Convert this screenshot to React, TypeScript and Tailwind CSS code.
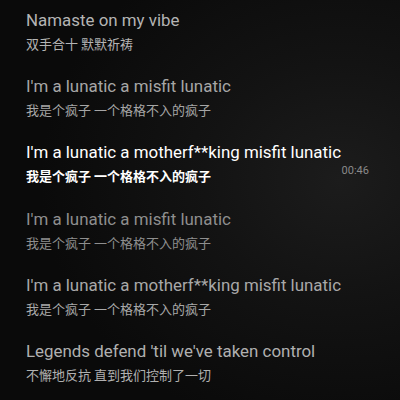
const lines = [
  { en: "Namaste on my vibe", zh: "双手合十 默默祈祷", tone: "text-[#b4b4b4]" },
  { en: "I'm a lunatic a misfit lunatic", zh: "我是个疯子 一个格格不入的疯子", tone: "text-[#a6a6a6]" },
  { en: "I'm a lunatic a motherf**king misfit lunatic", zh: "我是个疯子 一个格格不入的疯子", tone: "active" },
  { en: "I'm a lunatic a misfit lunatic", zh: "我是个疯子 一个格格不入的疯子", tone: "text-[#8e8e8e]" },
  { en: "I'm a lunatic a motherf**king misfit lunatic", zh: "我是个疯子 一个格格不入的疯子", tone: "text-[#a8a8a8]" },
  { en: "Legends defend 'til we've taken control", zh: "不懈地反抗 直到我们控制了一切", tone: "text-[#b0b0b0]" },
]

export default function App() {
  return (
    <div
      className="h-[400px] w-[400px] overflow-hidden bg-[#0b0b0b] pt-[9px] pl-[26px]"
      style={{
        background:
          "radial-gradient(ellipse 75% 65% at 85% 45%, #1c1c1c 0%, #131313 45%, #0a0a0a 100%)",
        fontFamily: "Roboto, 'Noto Sans CJK SC', sans-serif",
      }}
    >
      {lines.map((l, i) => {
        const active = l.tone === "active"
        return (
          <div key={i} className="h-[66.2px]">
            <div className={`text-[16.9px] leading-[22px] ${active ? "text-white" : l.tone}`}>{l.en}</div>
            <div className="mt-[3px] flex items-center pr-[31px]">
              <div
                className={`text-[13px] leading-[20px] ${active ? "font-bold text-white" : l.tone}`}
                style={{ fontFamily: "'Noto Sans CJK SC', sans-serif" }}
              >
                {l.zh}
              </div>
              {active && (
                <div className="ml-auto -mt-[10px] text-[11px] leading-[14px] text-[#8a8a8a]">00:46</div>
              )}
            </div>
          </div>
        )
      })}
    </div>
  )
}
